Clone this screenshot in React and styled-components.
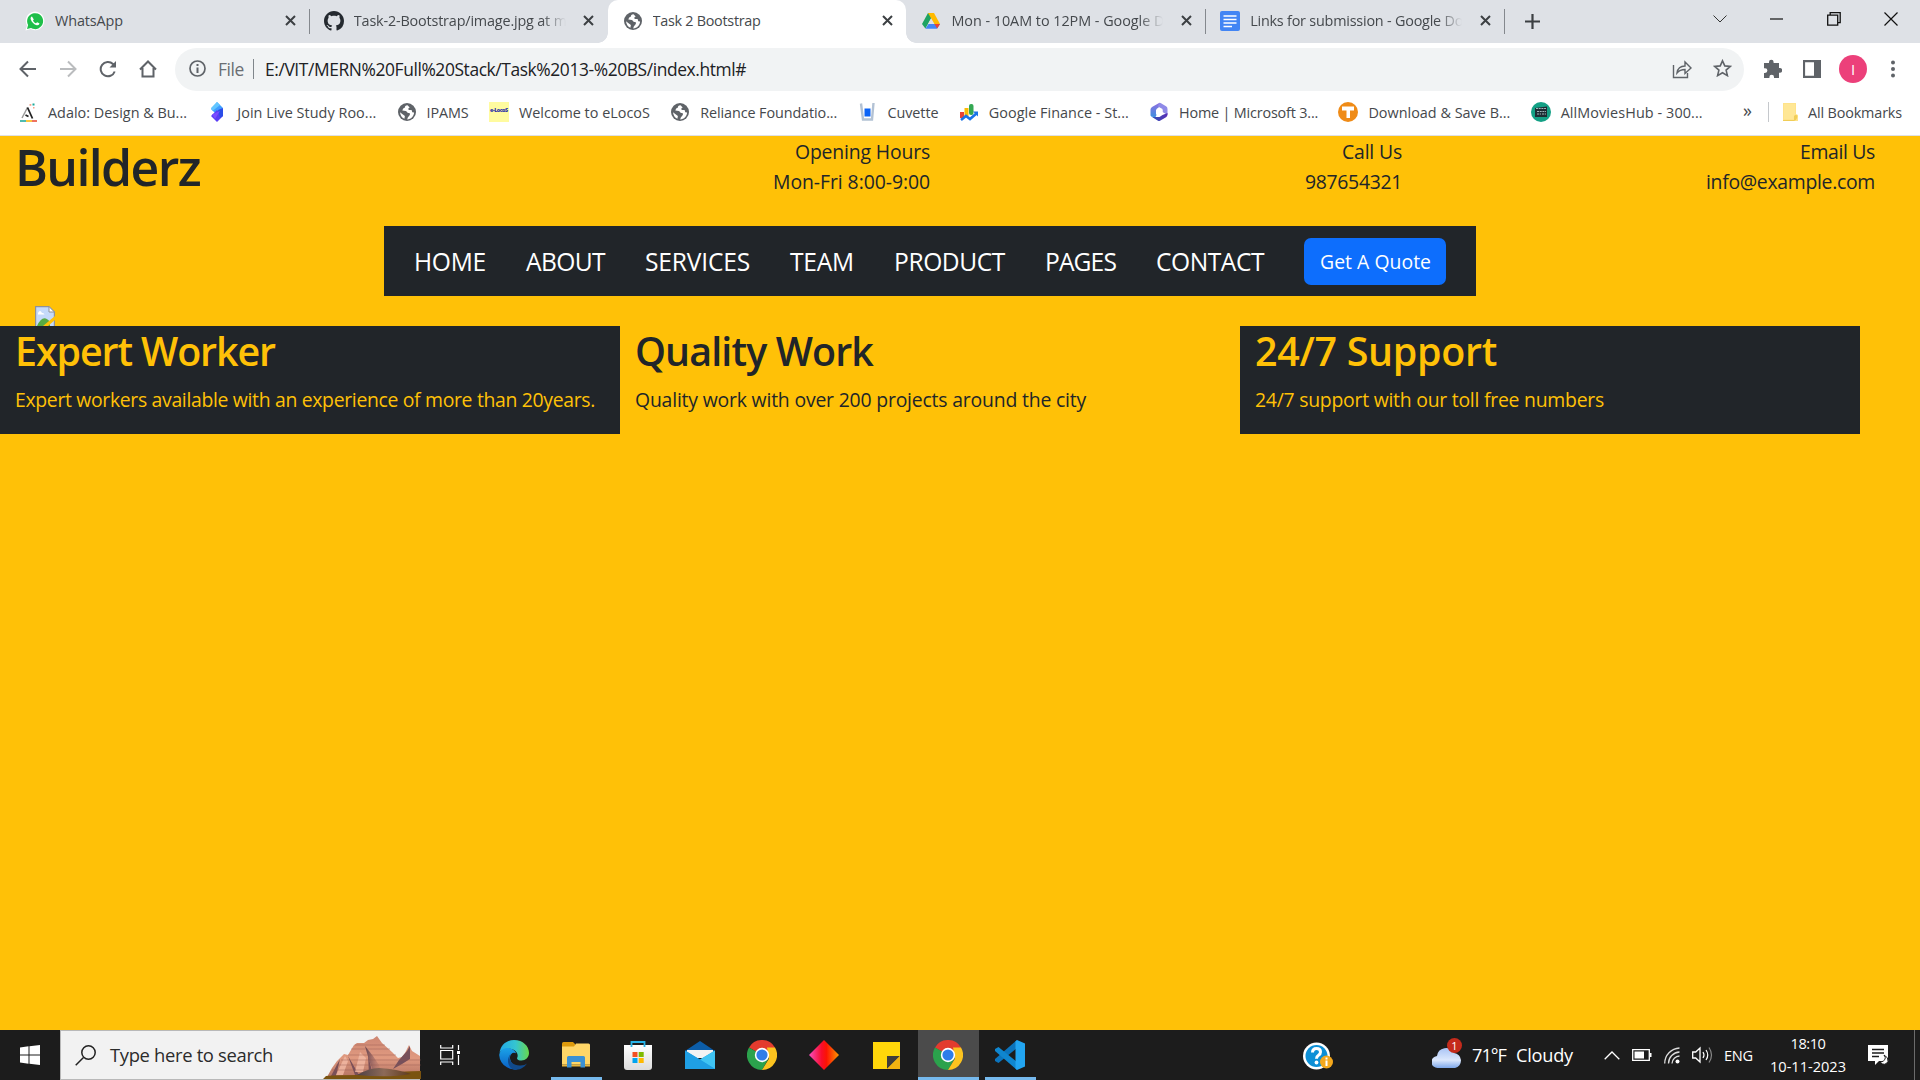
import React, { useLayoutEffect, useRef, useState } from "react";
import styled, { createGlobalStyle } from "styled-components";

const Global = createGlobalStyle`
  * { box-sizing: border-box; }
  body { margin: 0; background: #ffc107; font-family: "Open Sans", "Noto Sans", sans-serif; overflow: hidden; }
  svg { display: block; flex: none; }
`;

const Run = styled.span`
  display: block;
  flex: none;
  white-space: nowrap;
`;

/* Tracks a line of text so that it takes exactly the given width. */
function Fit({ width, children }) {
  const ref = useRef(null);
  const [spacing, setSpacing] = useState(0);
  useLayoutEffect(() => {
    const range = document.createRange();
    range.selectNodeContents(ref.current);
    const natural = range.getBoundingClientRect().width;
    setSpacing((width - natural) / children.length);
  }, [width, children]);
  return <Run ref={ref} style={{ width, letterSpacing: spacing }}>{children}</Run>;
}

const Screen = styled.div`
  width: 1920px;
  height: 1080px;
  display: flex;
  flex-direction: column;
  overflow: hidden;
`;

/* ---------- browser chrome ---------- */
const TabStrip = styled.div`
  height: 43px;
  flex: none;
  background: #dee1e6;
  display: flex;
  padding-left: 10px;
`;
const Tab = styled.div`
  width: 298.8px;
  height: 43px;
  flex: none;
  display: flex;
  align-items: center;
  padding: 0 0 2px 15px;
  color: #45494d;
  font-size: 14.4px;
  position: relative;
  background: ${(p) => (p.$active ? "#fff" : "transparent")};
  border-radius: 10px 10px 0 0;
  &::before, &::after {
    content: "";
    display: ${(p) => (p.$active ? "block" : "none")};
    position: absolute;
    bottom: 0;
    width: 10px;
    height: 10px;
  }
  &::before { left: -10px; background: radial-gradient(circle at 0 0, transparent 9.5px, #fff 10px); }
  &::after { right: -10px; background: radial-gradient(circle at 100% 0, transparent 9.5px, #fff 10px); }
`;
const TabTitle = styled.div`
  flex: none;
  margin-left: 10px;
  width: 213px;
  overflow: hidden;
  mask-image: ${(p) => (p.$fade ? "linear-gradient(90deg, #000 188px, transparent 212px)" : "none")};
`;
const TabClose = styled.div`
  flex: none;
  margin-left: 15px;
  width: 14px;
  display: flex;
  justify-content: center;
`;
const TabSeparator = styled.div`
  width: 1px;
  height: 25px;
  margin: 9px -1px 0 0;
  background: ${(p) => (p.$hidden ? "transparent" : "#84888d")};
`;
const NewTab = styled.div`
  margin: 14px 0 0 21px;
`;
const WindowButtons = styled.div`
  margin-left: auto;
  margin-right: 1px;
  display: flex;
  height: 38px;
`;
const WindowButton = styled.div`
  width: 57px;
  display: flex;
  align-items: center;
  justify-content: center;
`;
const Toolbar = styled.div`
  height: 48px;
  flex: none;
  background: #fff;
  display: flex;
  align-items: center;
  padding: 5px 0 0 14px;
`;
const ToolButton = styled.div`
  flex: none;
  width: ${(p) => p.$w || 40}px;
  display: flex;
  justify-content: center;
`;
const NavButtons = styled.div`
  flex: none;
  display: flex;
  width: 161px;
  margin-left: -6px;
  margin-right: 6px;
  padding-bottom: 2px;
`;
const AddressBar = styled.div`
  flex: none;
  width: 1569px;
  height: 43px;
  border-radius: 22px;
  background: #f1f3f4;
  display: flex;
  align-items: center;
  padding: 0 0 2px 14px;
  font-size: 17.4px;
  color: #202124;
`;
const Scheme = styled.div`
  margin-left: 12px;
  color: #6a6e73;
`;
const AddressSeparator = styled.div`
  width: 1px;
  height: 20px;
  margin: 0 11px 0 9px;
  background: #80868b;
`;
const AddressActions = styled.div`
  margin-left: auto;
  margin-right: 2px;
  display: flex;
`;
const ToolbarRight = styled.div`
  flex: none;
  display: flex;
  align-items: center;
  margin-left: 8px;
  padding-bottom: 2px;
`;
const Avatar = styled.div`
  width: 28px;
  height: 28px;
  border-radius: 50%;
  background: #ec407a;
  color: #fff;
  font-size: 15px;
  line-height: 28px;
  text-align: center;
`;
const BookmarkBar = styled.div`
  height: 45px;
  flex: none;
  background: #fff;
  border-bottom: 1px solid #dfe1e5;
  display: flex;
  align-items: center;
  gap: 20.3px;
  padding: 0 18px 2px 18px;
  color: #45484c;
  font-size: 14.4px;
`;
const Bookmark = styled.div`
  display: flex;
  align-items: center;
  gap: 10px;
`;
const BookmarkEnd = styled.div`
  margin-left: auto;
  display: flex;
  align-items: center;
`;
const Overflow = styled.div`
  font-size: 18px;
  line-height: 20px;
  padding-bottom: 4px;
  width: 25px;
`;
const BarSeparator = styled.div`
  width: 1px;
  height: 20px;
  margin-right: 13px;
  background: #c5c8cc;
`;
const LocoBadge = styled.div`
  width: 20px;
  height: 20px;
  background: #fffb9f;
  color: #2a2ea8;
  font-size: 5.4px;
  font-weight: 800;
  line-height: 17px;
  text-align: center;
  letter-spacing: -0.5px;
  white-space: nowrap;
`;

/* ---------- web page ---------- */
const Page = styled.main`
  height: 894px;
  flex: none;
  background: #ffc107;
  color: #212529;
  font-size: 19.4px;
  line-height: 30px;
`;
const Header = styled.header`
  display: flex;
  height: 90px;
`;
const Brand = styled.h1`
  margin: 0;
  padding-left: 15px;
  width: 465px;
  font-size: 50px;
  font-weight: 600;
  line-height: 62px;
`;
const Contact = styled.div`
  width: ${(p) => p.$w}px;
  display: flex;
  flex-direction: column;
  align-items: flex-end;
  padding-top: 1px;
`;
const Nav = styled.nav`
  width: 1092px;
  height: 70px;
  margin-left: 384px;
  padding: 0 30px;
  background: #212529;
  color: #fff;
  display: flex;
  align-items: center;
  gap: 40px;
  font-size: 24.6px;
  line-height: 38px;
  padding-top: 2px;
`;
const QuoteButton = styled.button`
  width: 142px;
  height: 47px;
  flex: none;
  margin-bottom: 2px;
  border: 0;
  border-radius: 7px;
  background: #0d6efd;
  color: #fff;
  font: 19.4px/30px "Open Sans", "Noto Sans", sans-serif;
  padding: 2px 0 0 16px;
  display: flex;
  align-items: center;
`;
const Banner = styled.div`
  height: 30px;
  padding: 10px 0 0 35px;
  overflow: hidden;
`;
const Features = styled.section`
  display: grid;
  grid-template-columns: repeat(3, 620px);
  height: 108px;
`;
const Feature = styled.article`
  padding: 1px 15px 0;
  background: ${(p) => (p.$dark ? "#212529" : "transparent")};
  color: ${(p) => (p.$dark ? "#ffc107" : "#212529")};
`;
const FeatureTitle = styled.h2`
  margin: 0 0 10px;
  font-size: 39.4px;
  font-weight: 600;
  line-height: 48px;
`;
const FeatureText = styled.p`
  margin: 0;
`;

/* ---------- taskbar ---------- */
const Taskbar = styled.footer`
  height: 50px;
  flex: none;
  background: #1c1c1c;
  color: #fff;
  display: flex;
`;
const Start = styled.div`
  flex: none;
  width: 60px;
  display: flex;
  align-items: center;
  justify-content: center;
`;
const Search = styled.div`
  flex: none;
  width: 360px;
  height: 50px;
  background: #f2f2f2;
  border: 1px solid #b9b9b9;
  border-right: 0;
  display: flex;
  align-items: center;
  padding-left: 14px;
  color: #2b2b2b;
  font-size: 18.4px;
`;
const SearchText = styled.div`
  margin: -2px 50px 0 14px;
`;
const TaskView = styled.div`
  flex: none;
  width: 63px;
  display: flex;
  align-items: center;
  padding-left: 20px;
`;
const TaskButton = styled.div`
  width: 62px;
  height: 50px;
  flex: none;
  display: flex;
  align-items: center;
  justify-content: center;
  background: ${(p) => (p.$active ? "linear-gradient(#4b4b4b, #4b4b4b) 50% 0 / 61px 100% no-repeat" : "transparent")};
  position: relative;
  &::after {
    content: "";
    display: ${(p) => (p.$open ? "block" : "none")};
    position: absolute;
    left: ${(p) => (p.$active ? 0.5 : 5.5)}px;
    width: ${(p) => (p.$active ? 61 : 51)}px;
    bottom: 0;
    height: 3px;
    background: #76b9ed;
  }
`;
const Help = styled.div`
  flex: none;
  margin: 12px 0 0 262px;
  width: 30px;
`;
const Weather = styled.div`
  flex: none;
  margin-left: 99px;
  width: 140px;
  display: flex;
  align-items: center;
  font-size: 18.2px;
  gap: 10px;
`;
const WeatherIcon = styled.div`
  position: relative;
  width: 30px;
  height: 32px;
  margin-top: -4px;
`;
const WeatherBadge = styled.div`
  position: absolute;
  left: 15px;
  top: 1px;
  width: 15px;
  height: 15px;
  border-radius: 50%;
  background: #c42b1c;
  font-size: 11px;
  line-height: 15px;
  text-align: center;
`;
const Tray = styled.div`
  flex: none;
  margin-left: 32px;
  display: flex;
  align-items: center;
  font-size: 14.6px;
`;
const Clock = styled.div`
  margin-left: 17px;
  width: 76px;
  display: flex;
  flex-direction: column;
  align-items: center;
  font-size: 14.6px;
  line-height: 23px;
`;
const ShowDesktop = styled.div`
  flex: none;
  width: 1px;
  height: 50px;
  margin-left: 4px;
  background: #6b6b6b;
`;

/* ---------- drawings ---------- */
const Globe = ({ s = 20 }) => (
  <svg width={s} height={s} viewBox="0 0 20 20">
    <circle cx="10" cy="10" r="9" fill="#5f6368" />
    <path d="M10.5 3.2c-2 .3-2.800 1-2.500 2.200l-1.600.8c-.3 1.200-1.200 1.400-1 2.400l3.400.5c1.400.2 1 2 2.700 2 1.300 0 1.700.6 1.300 2l-2 2.300-.6 2.200c3.800-.3 6.800-3.300 6.900-7l-1.800-.4-.7-2.200h-3l-.2-1.800 1.300-.6zM3 10.200c.3 3 1.700 5.300 4.400 6.500l.5-2.700-2-1.400z" fill="#fff" />
  </svg>
);
const Cross = () => (
  <svg width="11" height="11" viewBox="0 0 11 11"><path d="M1 1l9 9M10 1l-9 9" stroke="#3c4043" strokeWidth="2" /></svg>
);
const WhatsApp = () => (
  <svg width="20" height="20" viewBox="0 0 20 20">
    <path d="M0.500 19.500l1.500-5A9.300 9.300 0 1 1 5.600 18z" fill="#fff" />
    <path d="M2 18l1.100-4A8 8 0 1 1 6 17z" fill="#1fbf4a" />
    <path d="M7 5.500c-1 .2-1.800 1.300-1.200 3 .9 2.600 3.200 5 5.900 5.700 1.500.4 2.800-.6 2.700-1.900l-2.300-1.100-1.100 1.100c-1.300-.5-2.400-1.500-3-2.900l.8-1z" fill="#fff" />
  </svg>
);
const GitHub = () => (
  <svg width="20" height="20" viewBox="0 0 16 16">
    <path fill="#24292f" d="M8 0C3.580 0 0 3.580 0 8c0 3.540 2.290 6.530 5.470 7.590.4.070.55-.17.55-.38 0-.19-.01-.82-.01-1.490-2.010.37-2.530-.49-2.690-.94-.09-.23-.48-.94-.82-1.130-.28-.15-.68-.52-.01-.53.630-.01 1.080.58 1.230.82.720 1.210 1.870.87 2.330.66.070-.52.280-.87.510-1.070-1.780-.2-3.640-.89-3.640-3.950 0-.87.310-1.590.820-2.150-.08-.2-.36-1.020.08-2.120 0 0 .67-.21 2.200.82.640-.18 1.320-.27 2-.27s1.360.09 2 .27c1.530-1.040 2.200-.82 2.200-.82.440 1.100.160 1.920.080 2.120.510.560.820 1.270.820 2.150 0 3.070-1.870 3.750-3.650 3.950.290.250.540.730.540 1.480 0 1.070-.01 1.930-.01 2.200 0 .210.150.460.550.380A8.010 8.010 0 0 0 16 8c0-4.420-3.580-8-8-8z" />
  </svg>
);
const Drive = () => (
  <svg width="20" height="20" viewBox="0 0 20 20">
    <path d="M7 2h6l-3 5.500-5.600 10L1 13z" fill="#1ea362" />
    <path d="M7 2h6l6 11h-5.600z" fill="#ffba00" />
    <path d="M7.500 13H19l-3 4.800H4.400z" fill="#4285f4" />
    <path d="M13.400 13H19l-2.800 4.600z" fill="#ea4335" />
    <path d="M10 7.600L13 13H7z" fill="#dee1e6" />
  </svg>
);
const Docs = () => (
  <svg width="20" height="20" viewBox="0 0 20 20">
    <rect width="20" height="20" rx="2" fill="#4285f4" />
    <path d="M3.500 5h13M3.500 8.500h13M3.500 12h13M3.500 15.500h8.500" stroke="#fff" strokeWidth="1.700" />
  </svg>
);
const Adalo = () => (
  <svg width="20" height="20" viewBox="0 0 20 20">
    <path d="M9.500 5.500L4 16" stroke="#9a9a9a" strokeWidth="1.500" fill="none" />
    <path d="M9.500 5.500l5 11M7.500 13l3 1.500" stroke="#222" strokeWidth="1.800" fill="none" />
    <path d="M14.500 1.500h2v2h-2z" fill="#18a999" /><path d="M11.500 2h1.800v1.800h-1.800z" fill="#f6a08a" /><path d="M15 5h1.500v1.500H15z" fill="#f6a08a" />
    <path d="M2 19h6" stroke="#15a596" strokeWidth="1.500" /><path d="M8 19h6" stroke="#f8b500" strokeWidth="1.500" /><path d="M14 19h5" stroke="#e8452c" strokeWidth="1.500" />
  </svg>
);
const Study = () => (
  <svg width="20" height="20" viewBox="0 0 20 20">
    <path d="M10 0l6 6-6 7-6-6z" fill="#3f9dff" /><path d="M10 0l3 3-7.500 6L4 6z" fill="#62c6ff" />
    <path d="M10 20l-6-6 6-6 6 6z" fill="#5a3df5" /><path d="M11 8l5-2v8l-3 2z" fill="#2b4de8" /><path d="M5 12.500L13 9l-5 8z" fill="#7a4dff" />
  </svg>
);
const Cuvette = () => (
  <svg width="20" height="20" viewBox="0 0 20 20">
    <path d="M4 1.500L6 17.500H15l1.500-16.500" fill="none" stroke="#b3c2d4" strokeWidth="2.400" />
    <path d="M7.500 6.500h6v8h-6z" fill="#0b63f6" />
  </svg>
);
const Finance = () => (
  <svg width="20" height="20" viewBox="0 0 20 20">
    <rect x="1" y="10" width="4" height="6" fill="#ea4335" /><rect x="5.500" y="6" width="4" height="8" fill="#fbbc04" /><rect x="10" y="2" width="4.500" height="11" rx="2" fill="#34a853" />
    <path d="M2 18l5-4 4 3 7-6" fill="none" stroke="#1a73e8" strokeWidth="2.600" /><path d="M14 9.500h5v5z" fill="#1a73e8" />
  </svg>
);
const M365 = () => (
  <svg width="20" height="20" viewBox="0 0 20 20">
    <defs>
      <linearGradient id="o1" x1="0" x2="0" y1="0" y2="1"><stop offset="0" stopColor="#8f6fe0" /><stop offset="1" stopColor="#3f8fe0" /></linearGradient>
      <linearGradient id="o2"><stop offset="0" stopColor="#2f53b8" /><stop offset="1" stopColor="#5a2fb4" /></linearGradient>
    </defs>
    <path d="M10.500 .8L3 5Q1.500 6 1.500 7.500v6Q2 15.500 6.500 15q1-1 1-3V7l4-3V1z" fill="url(#o1)" />
    <path d="M10 1.200q1-.6 2 0l5 3Q18.500 5 18.500 7v6l-5-3V7L9 4.500z" fill="#8f8ae8" />
    <path d="M3 15l6 3.800q1 .6 2 0l6-3.600q1.500-1 1.500-2.700V11l-5 2-3 2z" fill="url(#o2)" />
    <path d="M7 8l3.200-2 3.300 2v4l-3.300 2L7 12z" fill="#fff" />
  </svg>
);
const TubeT = () => (
  <svg width="20" height="20" viewBox="0 0 20 20">
    <circle cx="10" cy="10" r="10" fill="#ef8b17" /><path d="M4 4.500h12v4h-4V16H8.500V8.500H4z" fill="#fff" />
  </svg>
);
const Movies = () => (
  <svg width="20" height="20" viewBox="0 0 20 20">
    <circle cx="10" cy="10" r="10" fill="#13a085" /><path d="M4 6l12-1.500v10.500H4z" fill="#1d2c33" />
    <path d="M5 6.500h10M6 9.500h9M6 12h4M11 12h4" stroke="#9fb5bb" strokeWidth="1" strokeDasharray="2 .7" />
  </svg>
);
const Folder = () => (
  <svg width="16" height="20" viewBox="0 0 16 20"><path d="M1 1h13v11l2 1v6H1z" fill="#ffe38a" /><path d="M1 18h11v-4q0-1 2-1t1 3-3 3H1z" fill="#f0cd57" /><path d="M2 2h11v11q-1.500 0-1.500 4H2z" fill="#ffe795" /></svg>
);
const Chrome = () => (
  <svg width="30" height="30" viewBox="0 0 30 30">
    <path d="M15 15L2 7.500A15 15 0 0 1 28 7.500z" fill="#e33b2e" />
    <path d="M2 7.500A15 15 0 0 0 15 30l6.500-11.500L15 15z" fill="#2ba24c" />
    <path d="M28 7.500A15 15 0 0 1 15 30l7-11.500L20 7.500z" fill="#fcc31f" />
    <circle cx="15" cy="15" r="7.200" fill="#fff" /><circle cx="15" cy="15" r="5.600" fill="#2f7de9" />
  </svg>
);
const Edge = () => (
  <svg width="30" height="30" viewBox="0 0 30 30">
    <defs>
      <linearGradient id="e1" x1="0" x2="1"><stop offset="0" stopColor="#21a9e8" /><stop offset=".55" stopColor="#35c5d0" /><stop offset="1" stopColor="#68d84c" /></linearGradient>
      <linearGradient id="e2" y1="0" y2="1" x1="0" x2="0"><stop offset="0" stopColor="#1ba3e8" /><stop offset="1" stopColor="#0a5fc4" /></linearGradient>
    </defs>
    <path d="M.5 13C1.500 5 7.500 0 15 0c9 0 15 6 15 13 0 4.500-3.500 7.500-7.500 7.500-3 0-5-1.200-4.300-2.700 1.500-3-.4-8-7-9C6.500 8.500 2 10 .5 13z" fill="url(#e1)" />
    <path d="M.2 15C1 9 6.500 7 11 8.300c3.500 1 5.500 3 6 5-3-2-6.500 1-6 5 .6 5.500 5.500 10 11.500 9A15 15 0 0 1 .2 15z" fill="url(#e2)" />
    <path d="M12 13.500c-4 5 .5 12.500 9.500 12 3 0 5-1 6.500-2C25 28 20 30 15.500 30 9 28 6.500 19 12 13.500z" fill="#114a8b" />
  </svg>
);
const Explorer = () => (
  <svg width="28" height="26" viewBox="0 0 28 26">
    <path d="M0 1.500Q0 0 1.500 0H11l2 2v4H0z" fill="#dd9a0c" /><path d="M0 4.500h12L14 1.500h12.500Q28 1.500 28 3v19H0z" fill="#ffd667" />
    <path d="M0 22.500h28v2H0z" fill="#e8b63e" /><path d="M0 20h28v2.500H0z" fill="#ffd667" /><path d="M5 25.500V15.500Q5 14 6.500 14h15Q23 14 23 15.500v10h-4.500V20h-9v5.500z" fill="#3b91d4" />
  </svg>
);
const Store = () => (
  <svg width="30" height="30" viewBox="0 0 30 30">
    <defs><linearGradient id="s1" x1="0" x2="0" y1="0" y2="1"><stop offset="0" stopColor="#fff" /><stop offset="1" stopColor="#dcdcdc" /></linearGradient></defs>
    <path d="M1 5h28v22q0 3-3 3H4q-3 0-3-3z" fill="url(#s1)" />
    <path d="M8.500 7V2h13v5" fill="none" stroke="#26b3e8" strokeWidth="1.800" />
    <path d="M9.500 12h5v5h-5z" fill="#f25022" /><path d="M15.700 12h5v5h-5z" fill="#7fba00" /><path d="M9.500 18h5v5h-5z" fill="#00a4ef" /><path d="M15.700 18h5v5h-5z" fill="#ffb900" />
  </svg>
);
const Mail = () => (
  <svg width="30" height="30" viewBox="0 -2 30 30">
    <path d="M0 9L15 -1l15 10v5H0z" fill="#0c5da8" /><path d="M2 8h26v8H2z" fill="#f3f3f3" />
    <path d="M0 8.500L15 17.500 30 8.500V27H0z" fill="#22a3e6" /><path d="M15 17.500L30 8.500V27z" fill="#40c4f3" /><path d="M0 27V8.500L30 27z" fill="#1f9fe4" />
  </svg>
);
const Diamond = () => (
  <svg width="30" height="30" viewBox="0 0 30 30">
    <defs><linearGradient id="d1"><stop offset="0" stopColor="#f74fc0" /><stop offset=".42" stopColor="#f80d2c" /><stop offset=".58" stopColor="#fb1303" /><stop offset="1" stopColor="#ff9800" /></linearGradient></defs>
    <path d="M15 0l15 15-15 15L0 15z" fill="url(#d1)" />
  </svg>
);
const Sticky = () => (
  <svg width="27" height="27" viewBox="0 0 27 27"><path d="M0 0h27v27H0z" fill="#ffd60a" /><path d="M14 14h13L14 27z" fill="#3f3d3a" /><path d="M27 14v13H14z" fill="#f2b211" /></svg>
);
const VSCode = () => (
  <svg width="30" height="30" viewBox="0 0 30 30">
    <path d="M22 0v8L3.500 23 0 21v-2z" fill="#0b74bd" /><path d="M22 30v-8L3.500 7 0 9v2z" fill="#0f86cf" />
    <path d="M22 0l8 3.500v23L22 30l-1.500-1.500V1.500z" fill="#22a5f1" />
  </svg>
);
const Mountains = () => (
  <svg width="98" height="48" viewBox="0 0 98 48">
    <defs>
      <linearGradient id="m1" x1="0" x2="0" y1="0" y2="1"><stop offset="0" stopColor="#cd8672" /><stop offset=".5" stopColor="#e09a80" /><stop offset="1" stopColor="#b06f60" /></linearGradient>
      <linearGradient id="m2"><stop offset="0" stopColor="#4d3f44" /><stop offset=".5" stopColor="#8d6a58" /><stop offset="1" stopColor="#5e3a1c" /></linearGradient>
      <linearGradient id="m3"><stop offset="0" stopColor="#5d414e" /><stop offset="1" stopColor="#b8766b" stopOpacity=".2" /></linearGradient>
    </defs>
    <path d="M4 46L9 37l5-7 7-7 4 1 6-10 3-2 7 0 4-3 5-1 4-3 5 7 10 9 6 6 4-1 3-4 4-8 3 6 8 5v24z" fill="url(#m1)" />
    <path d="M42 15l8 10 6 9 2 6H50L46 29z" fill="url(#m3)" /><path d="M84 20l3-5 0 13-8 5-9 5 6-9z" fill="#76505b" />
    <path d="M17 28l-9 17h5zM25 25l7 19h4zM45 24l5 20h-4z" fill="#7a5059" />
    <path d="M22 25l-9 19h7l5-14zM37 21l-5 20h8l3-14z" fill="#f2baa5" opacity=".8" />
    <path d="M32 14h30M28 18h39M25 24h48M18 29h80M13 34h85M9 39h60" stroke="#8f544f" strokeWidth="1" opacity=".4" />
    <path d="M0 48l3-3q12-1 32-1l40-2q4-2 23-2v8z" fill="#7a5310" />
    <path d="M34 44Q46 37 56 37q18 1 32 6-22 4-54 1z" fill="url(#m2)" />
  </svg>
);
const BrokenImage = () => (
  <svg width="20" height="20" viewBox="0 0 20 20">
    <path d="M.6 20V.6H14L19.400 6v14" fill="#c5dafa" stroke="#8f9299" strokeWidth="1.200" />
    <path d="M14 .6V6h5.400z" fill="#fff" stroke="#8f9299" />
    <path d="M3 7q2-4 4 0 2-.5 2.500 1.500H3z" fill="#fff" />
    <path d="M2 20q6-13 13-4v4z" fill="#57ab43" /><path d="M8 20l12-10v4l-7 6z" fill="#ffc107" />
  </svg>
);

const tabs = [
  { title: "WhatsApp", w: 68, icon: <WhatsApp /> },
  { title: "Task-2-Bootstrap/image.jpg at m", w: 213, icon: <GitHub />, fade: true, last: true },
  { title: "Task 2 Bootstrap", w: 108, icon: <Globe />, active: true, last: true },
  { title: "Mon - 10AM to 12PM - Google D", w: 213, icon: <Drive />, fade: true },
  { title: "Links for submission - Google Do", w: 213, icon: <Docs />, fade: true },
];
const bookmarks = [
  ["Adalo: Design & Bu...", 139, <Adalo />],
  ["Join Live Study Roo...", 139, <Study />],
  ["IPAMS", 42, <Globe />],
  ["Welcome to eLocoS", 131, <LocoBadge>e-LocoS</LocoBadge>],
  ["Reliance Foundatio...", 137, <Globe />],
  ["Cuvette", 51, <Cuvette />],
  ["Google Finance - St...", 140, <Finance />],
  ["Home | Microsoft 3...", 139, <M365 />],
  ["Download & Save B...", 142, <TubeT />],
  ["AllMoviesHub - 300...", 142, <Movies />],
];
const menu = [["HOME", 72], ["ABOUT", 79], ["SERVICES", 105], ["TEAM", 64], ["PRODUCT", 111], ["PAGES", 71], ["CONTACT", 108]];
const contacts = [
  ["Opening Hours", 135, "Mon-Fri 8:00-9:00", 157, 465],
  ["Call Us", 60, "987654321", 97, 472],
  ["Email Us", 75, "info@example.com", 169, 473],
];
const features = [
  ["Expert Worker", 260, "Expert workers available with an experience of more than 20years.", 580, true],
  ["Quality Work", 238, "Quality work with over 200 projects around the city", 451, false],
  ["24/7 Support", 242, "24/7 support with our toll free numbers", 349, true],
];
const apps = [
  { icon: <Edge /> }, { icon: <Explorer />, open: true }, { icon: <Store /> }, { icon: <Mail /> }, { icon: <Chrome /> },
  { icon: <Diamond /> }, { icon: <Sticky /> }, { icon: <Chrome />, open: true, active: true }, { icon: <VSCode />, open: true },
];
const gray = { fill: "none", stroke: "#5f6368", strokeWidth: 2 };

export default function App() {
  return (
    <Screen>
      <Global />
      <TabStrip>
        {tabs.map((t) => (
          <React.Fragment key={t.title}>
            <Tab $active={t.active}>
              {t.icon}
              <TabTitle $fade={t.fade}><Fit width={t.w}>{t.title}</Fit></TabTitle>
              <TabClose><Cross /></TabClose>
            </Tab>
            <TabSeparator $hidden={t.last} />
          </React.Fragment>
        ))}
        <NewTab><svg width="15" height="15" viewBox="0 0 15 15"><path d="M7.500 0v15M0 7.500h15" stroke="#3c4043" strokeWidth="2.200" /></svg></NewTab>
        <WindowButtons>
          <WindowButton><svg width="14" height="8" viewBox="0 0 14 8"><path d="M.5.5L7 7 13.500.5" fill="none" stroke="#333" /></svg></WindowButton>
          <WindowButton><svg width="13" height="2" viewBox="0 0 13 2"><path d="M0 1h13" stroke="#111" strokeWidth="1.200" /></svg></WindowButton>
          <WindowButton><svg width="14" height="14" viewBox="0 0 14 14"><path d="M.7 3.200h10v10H.7zM3.200 3V.7h10v10h-2.500" fill="none" stroke="#111" strokeWidth="1.300" /></svg></WindowButton>
          <WindowButton><svg width="14" height="14" viewBox="0 0 14 14"><path d="M.5.5l13 13M13.500.5l-13 13" stroke="#111" strokeWidth="1.200" /></svg></WindowButton>
        </WindowButtons>
      </TabStrip>
      <Toolbar>
        <NavButtons>
          <ToolButton><svg width="18" height="18" viewBox="0 0 18 18"><path d="M17 9H2M9 1.500L1.500 9 9 16.500" {...gray} /></svg></ToolButton>
          <ToolButton><svg width="18" height="18" viewBox="0 0 18 18"><path d="M1 9h15M9 1.500L16.500 9 9 16.500" {...gray} stroke="#babcbe" /></svg></ToolButton>
          <ToolButton><svg width="18" height="18" viewBox="0 0 18 18"><path d="M15.700 11.500A7.200 7.200 0 1 1 14 4l2 2" {...gray} /><path d="M17 1v6.500h-6.500z" fill="#5f6368" /></svg></ToolButton>
          <ToolButton><svg width="18" height="18" viewBox="0 0 18 18"><path d="M1 9.500L9 1.500l8 8M3.500 8v8.500h11V8" {...gray} /></svg></ToolButton>
        </NavButtons>
        <AddressBar>
          <svg width="17" height="17" viewBox="0 0 17 17"><circle cx="8.500" cy="8.500" r="7.500" {...gray} strokeWidth="1.700" /><path d="M8.500 4v2M8.500 7.500V13" stroke="#5f6368" strokeWidth="2" /></svg>
          <Scheme><Fit width={26}>File</Fit></Scheme>
          <AddressSeparator />
          <Fit width={481}>E:/VIT/MERN%20Full%20Stack/Task%2013-%20BS/index.html#</Fit>
          <AddressActions>
            <ToolButton><svg width="20" height="20" viewBox="0 0 20 20"><path d="M1.500 6v12.500h14V14M5 14q1-7 8-7V3l6 6-6 5.500v-4Q8 10.500 5 14z" {...gray} strokeWidth="1.400" /></svg></ToolButton>
            <ToolButton><svg width="19" height="18" viewBox="0 0 19 18"><path d="M9.500 1.800l2.300 5.100 5.500.5-4.200 3.700 1.300 5.500-4.900-2.900-4.900 2.900 1.300-5.500-4.200-3.700 5.500-.5z" {...gray} strokeWidth="1.600" /></svg></ToolButton>
          </AddressActions>
        </AddressBar>
        <ToolbarRight>
          <ToolButton><svg width="19" height="19" viewBox="0 0 19 19"><path d="M1 4h5V3a2.300 2.300 0 0 1 4.600 0v1H16v5h.8a2.400 2.400 0 0 1 0 4.800H16V19h-5v-1a2.300 2.300 0 0 0-4.600 0v1H1v-5h1a2.400 2.400 0 0 0 0-4.800H1z" fill="#5f6368" /></svg></ToolButton>
          <ToolButton><svg width="18" height="18" viewBox="0 0 18 18"><path d="M1 1.200h16v15.600H1z" {...gray} strokeWidth="2.200" /><path d="M11 1h6v16h-6z" fill="#5f6368" /></svg></ToolButton>
          <ToolButton $w={42}><Avatar>I</Avatar></ToolButton>
          <ToolButton $w={37}><svg width="4" height="18" viewBox="0 0 4 18"><circle cx="2" cy="2.500" r="2" fill="#5f6368" /><circle cx="2" cy="9" r="2" fill="#5f6368" /><circle cx="2" cy="15.500" r="2" fill="#5f6368" /></svg></ToolButton>
        </ToolbarRight>
      </Toolbar>
      <BookmarkBar>
        {bookmarks.map(([label, w, icon]) => (
          <Bookmark key={label}>{icon}<Fit width={w}>{label}</Fit></Bookmark>
        ))}
        <BookmarkEnd>
          <Overflow>»</Overflow>
          <BarSeparator />
          <Bookmark><Folder /><Fit width={94}>All Bookmarks</Fit></Bookmark>
        </BookmarkEnd>
      </BookmarkBar>
      <Page>
        <Header>
          <Brand><Fit width={185}>Builderz</Fit></Brand>
          {contacts.map(([label, lw, value, vw, w]) => (
            <Contact key={label} $w={w}><Fit width={lw}>{label}</Fit><Fit width={vw}>{value}</Fit></Contact>
          ))}
        </Header>
        <Nav>
          {menu.map(([label, w]) => <Fit key={label} width={w}>{label}</Fit>)}
          <QuoteButton><Fit width={111}>Get A Quote</Fit></QuoteButton>
        </Nav>
        <Banner><BrokenImage /></Banner>
        <Features>
          {features.map(([title, tw, text, w, dark]) => (
            <Feature key={title} $dark={dark}>
              <FeatureTitle><Fit width={tw}>{title}</Fit></FeatureTitle>
              <FeatureText><Fit width={w}>{text}</Fit></FeatureText>
            </Feature>
          ))}
        </Features>
      </Page>
      <Taskbar>
        <Start><svg width="20" height="20" viewBox="0 0 20 20"><path d="M0 2.500l8.500-1.200v8.200H0zM9.500 1.200L20 0v9.500H9.500zM0 10.500h8.500v8.200L0 17.500zM9.500 10.500H20V20L9.500 18.800z" fill="#fff" /></svg></Start>
        <Search>
          <svg width="21" height="21" viewBox="0 0 21 21"><circle cx="13.500" cy="7.500" r="6.700" fill="none" stroke="#222" strokeWidth="1.500" /><path d="M8.500 12.500L.7 20.300" stroke="#222" strokeWidth="1.500" /></svg>
          <SearchText><Fit width={163}>Type here to search</Fit></SearchText>
          <Mountains />
        </Search>
        <TaskView><svg width="21" height="20" viewBox="0 0 21 20"><path d="M.7 0v3h12V0M.7 5.500h12v8.500H.7zM.7 20v-3h12v3M18.500 0v5M18.500 10v10" fill="none" stroke="#fff" strokeWidth="1.200" /><path d="M17 6h3v3h-3z" fill="#fff" /></svg></TaskView>
        {apps.map((a, i) => <TaskButton key={i} $open={a.open} $active={a.active}>{a.icon}</TaskButton>)}
        <Help>
          <svg width="30" height="28" viewBox="0 0 30 28"><circle cx="13.500" cy="14" r="13.500" fill="#fff" /><circle cx="13.500" cy="14" r="11" fill="#0d8fd6" /><path d="M9.500 10.500q0-4 4-4t4 3.500q0 2-2 3.200-2 1.200-2 3.500" fill="none" stroke="#fff" strokeWidth="3" /><circle cx="13.500" cy="20.500" r="1.900" fill="#fff" /><circle cx="23.500" cy="20" r="6.500" fill="#f5a81c" /><path d="M23.500 15.500v2M23.500 18.500v5.500" stroke="#fff" strokeWidth="2" /></svg>
        </Help>
        <Weather>
          <WeatherIcon>
            <svg width="30" height="32" viewBox="0 0 30 32"><defs><linearGradient id="w1" x1="0" x2="0" y1="0" y2="1"><stop offset="0" stopColor="#a9c4f5" /><stop offset=".6" stopColor="#dce8fd" /><stop offset="1" stopColor="#7da7ea" /></linearGradient></defs><path d="M6 31a6 6 0 0 1-1-12 9 9 0 0 1 17-3 7.600 7.600 0 0 1 1 15z" fill="url(#w1)" /></svg>
            <WeatherBadge>1</WeatherBadge>
          </WeatherIcon>
          <Fit width={34}>71°F</Fit>
          <Fit width={57}>Cloudy</Fit>
        </Weather>
        <Tray>
          <svg width="16" height="9" viewBox="0 0 16 9"><path d="M.7 8.300L8 1l7.300 7.300" fill="none" stroke="#fff" strokeWidth="1.300" /></svg>
          <ToolButton $w={44}><svg width="20" height="12" viewBox="0 0 20 12"><path d="M.7.700h16.600v10.600H.7z" fill="none" stroke="#fff" strokeWidth="1.300" /><path d="M2.500 2.500H12v7H2.500zM18 4h1.500v4H18z" fill="#fff" /></svg></ToolButton>
          <ToolButton $w={16}><svg width="16" height="17" viewBox="0 0 16 17"><path d="M.7 16.500A15.500 15.500 0 0 1 15.500 1M4.500 16.500A11.500 11.500 0 0 1 15.500 5M8 16.500A8 8 0 0 1 15.500 9" fill="none" stroke="#ddd" strokeWidth="1.300" /><circle cx="13.500" cy="14.500" r="2" fill="#fff" /></svg></ToolButton>
          <ToolButton $w={44}><svg width="21" height="18" viewBox="0 0 21 18"><path d="M.7 6h3L8 2v14l-4.300-4H.7z" fill="none" stroke="#fff" strokeWidth="1.300" /><path d="M11 6q2 3 0 6M14 4q3.500 5 0 10" fill="none" stroke="#fff" strokeWidth="1.200" /><path d="M17 1.500q5 7.500 0 15" fill="none" stroke="#888" strokeWidth="1.200" /></svg></ToolButton>
          <Fit width={29}>ENG</Fit>
          <Clock><Fit width={35}>18:10</Fit><Fit width={76}>10-11-2023</Fit></Clock>
          <ToolButton $w={64}><svg width="21" height="21" viewBox="0 0 21 21"><path d="M0 0h20v16h-9l-4 4v-4H0z" fill="#fff" /><path d="M4 4.500h12M4 8h12M4 11.500h7" stroke="#1c1c1c" strokeWidth="1.300" /><path d="M16 10q4 5-4 7.500 5 4 8-1 1-4-4-6.500z" fill="#fff" stroke="#1c1c1c" /></svg></ToolButton>
        </Tray>
        <ShowDesktop />
      </Taskbar>
    </Screen>
  );
}
